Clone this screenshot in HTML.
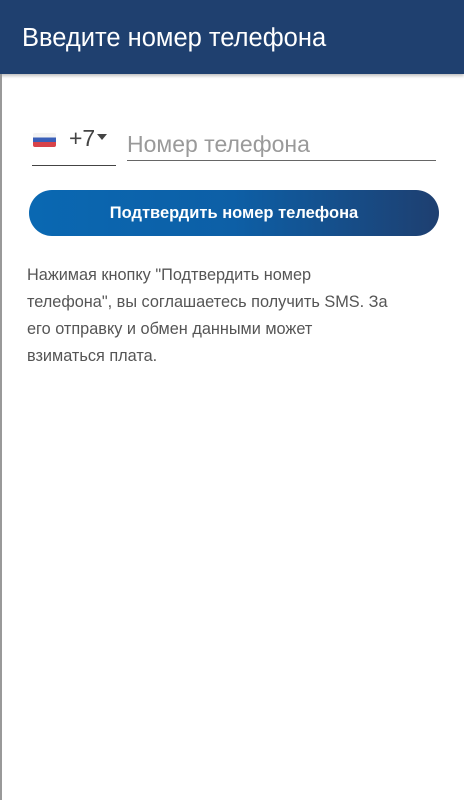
<!DOCTYPE html>
<html><head><meta charset="utf-8"><style>
body{margin:0;width:464px;height:800px;background:#fff;font-family:"Liberation Sans","DejaVu Sans",sans-serif;position:relative;overflow:hidden}
.hdr{position:absolute;left:0;top:0;width:464px;height:74px;background:#1f406f;box-shadow:0 2px 3px rgba(0,0,0,.25)}
.hdr span{position:absolute;left:22px;top:24px;color:#fff;font-size:25.5px;white-space:nowrap}
.edge{position:absolute;left:0;top:74px;width:2px;height:726px;background:#999}
.flag{position:absolute;left:33px;top:133px;width:23px;height:14px;border-radius:2px;background:linear-gradient(#f3f3f3 0 33%,#3a5fb8 33% 66%,#d8434a 66%)}
.code{position:absolute;left:69px;top:125px;font-size:23px;color:#444}
.tri{position:absolute;left:97px;top:134px;width:0;height:0;border-left:5px solid transparent;border-right:5px solid transparent;border-top:6px solid #444}
.l1{position:absolute;left:32px;top:165px;width:84px;height:1px;background:#444}
.ph{position:absolute;left:127px;top:131px;font-size:23px;color:#9a9a9a;white-space:nowrap}
.l2{position:absolute;left:127px;top:160px;width:309px;height:1px;background:#666}
.btn{position:absolute;left:29px;top:190px;width:410px;height:46px;border-radius:23px;background:linear-gradient(90deg,#0a68b2,#0d5fa6 50%,#1e3f70);color:#fff;font-weight:bold;font-size:16.5px;text-align:center;line-height:46px}
.txt{position:absolute;left:27px;top:262px;font-size:16.3px;line-height:27px;color:#555;white-space:nowrap}
</style></head><body>
<div class="hdr"><span>Введите номер телефона</span></div>
<div class="edge"></div>
<div class="flag"></div><div class="code">+7</div><div class="tri"></div><div class="l1"></div>
<div class="ph">Номер телефона</div><div class="l2"></div>
<div class="btn">Подтвердить номер телефона</div>
<div class="txt">Нажимая кнопку "Подтвердить номер<br>телефона", вы соглашаетесь получить SMS. За<br>его отправку и обмен данными может<br>взиматься плата.</div>
</body></html>
